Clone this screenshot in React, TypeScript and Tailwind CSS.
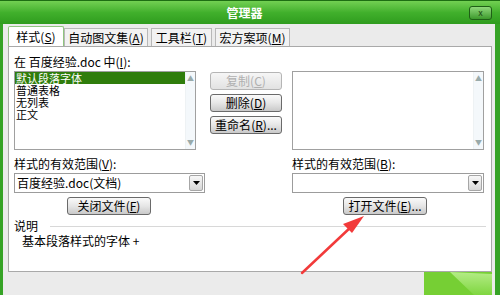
import React from 'react';

const font = { fontFamily: '"Noto Sans CJK SC", "Liberation Sans", sans-serif' };

function Key({ k }: { k: string }) {
  return (
    <>
      (<span className="underline">{k}</span>)
    </>
  );
}

function Btn({ children, disabled, w }: { children: React.ReactNode; disabled?: boolean; w: string }) {
  return (
    <div
      className={`${w} h-[18px] flex items-center justify-center rounded-[3px] border text-[12px] leading-none ${
        disabled
          ? 'border-[#b5b5b5] text-[#b0b0b0] bg-gradient-to-b from-[#f6f6f6] to-[#e2e2e2]'
          : 'border-[#6a6a6a] text-black bg-gradient-to-b from-[#fafafa] via-[#e6e6e6] to-[#c9c9c9]'
      }`}
    >
      {children}
    </div>
  );
}

function ScrollBar() {
  return (
    <div className="w-[10px] h-full flex flex-col justify-between items-center bg-[#f4f8fb] border-l border-[#eef2f4] text-[7px] text-[#9aa] leading-none py-[3px]">
      <span>▲</span>
      <span>▼</span>
    </div>
  );
}

function Combo({ text }: { text?: string }) {
  return (
    <div className="h-[20px] flex border border-[#9c9c9c] bg-white">
      <div className="flex-1 flex items-center pl-[2px] text-[12px] leading-none">{text}</div>
      <div className="w-[14px] m-[1px] flex items-center justify-center rounded-[2px] border border-[#a6a6a6] bg-gradient-to-b from-[#f8f8f8] to-[#d6d6d6]">
        <svg width="7" height="4" viewBox="0 0 7 4">
          <polygon points="0,0 7,0 3.5,4" fill="#000" />
        </svg>
      </div>
    </div>
  );
}

export default function App() {
  const styles = ['默认段落字体', '普通表格', '无列表', '正文'];
  return (
    <div className="w-[500px] h-[295px] overflow-hidden relative flex flex-col bg-[#36a326]" style={font}>
      {/* title bar */}
      <div className="h-[24px] flex items-center bg-gradient-to-b from-[#72d052] via-[#41b02c] to-[#2f9c1e] border-t border-[#1d6e12]">
        <div className="flex-1 text-center text-white text-[12px] font-bold pl-[20px]">管理器</div>
        <div className="w-[23px] h-[14px] mr-[8px] rounded-[3px] border border-[#1f5f16] bg-gradient-to-b from-[#8fd97a] to-[#3c9a2b] flex items-center justify-center text-[9px] text-[#1b4b12] leading-none">
          x
        </div>
      </div>

      {/* body */}
      <div className="flex-1 ml-[3px] mr-[5px] bg-[#ebebeb] flex flex-col text-black">
        {/* tabs */}
        <div className="flex items-end h-[22px] pl-[5px] text-[12px] leading-none">
          <div className="w-[56px] h-[20px] flex items-center justify-center border border-b-0 border-[#8fc57f] bg-white rounded-t-[2px]">
            样式<Key k="S" />
          </div>
          <div className="w-[84px] h-[18px] flex items-center justify-center border border-b-0 border-[#b8b8b8] bg-[#f2f2f2]">
            自动图文集<Key k="A" />
          </div>
          <div className="w-[61px] h-[18px] ml-[3px] flex items-center justify-center border border-b-0 border-[#b8b8b8] bg-[#f2f2f2]">
            工具栏<Key k="T" />
          </div>
          <div className="w-[75px] h-[18px] ml-[3px] flex items-center justify-center border border-b-0 border-[#b8b8b8] bg-[#f2f2f2]">
            宏方案项<Key k="M" />
          </div>
        </div>

        {/* panel */}
        <div className="ml-[5px] mr-[3px] h-[226px] bg-white border border-[#a9a9a9] flex flex-col px-[5px] pt-[9px] text-[12px] leading-none">
          <div className="h-[12px]">在 百度经验.doc 中<Key k="I" />:</div>

          <div className="flex mt-[3px] h-[79px]">
            <div className="w-[182px] h-full border border-[#a0a0a0] flex">
              <div className="flex-1 text-[11px] leading-[12px]">
                {styles.map((s, i) => (
                  <div key={s} className={i === 0 ? 'bg-[#2f7d0c] text-white pl-[1px] h-[12px]' : 'pl-[1px] h-[12px]'}>
                    {s}
                  </div>
                ))}
              </div>
              <ScrollBar />
            </div>
            <div className="w-[96px] flex flex-col items-center gap-[4px] pt-[1px] pl-[4px]">
              <Btn w="w-[72px]" disabled>复制<Key k="C" /></Btn>
              <Btn w="w-[72px]">删除<Key k="D" /></Btn>
              <Btn w="w-[72px]">重命名<Key k="R" />...</Btn>
            </div>
            <div className="w-[192px] h-full border border-[#a0a0a0] flex">
              <div className="flex-1" />
              <ScrollBar />
            </div>
          </div>

          <div className="flex mt-[7px]">
            <div className="w-[278px] flex flex-col">
              <div className="h-[14px] flex items-center">样式的有效范围<Key k="V" />:</div>
              <div className="w-[191px] mt-[2px]">
                <Combo text="百度经验.doc(文档)" />
              </div>
              <div className="pl-[53px] mt-[4px]">
                <Btn w="w-[84px]">关闭文件<Key k="F" /></Btn>
              </div>
            </div>
            <div className="w-[192px] flex flex-col">
              <div className="h-[14px] flex items-center">样式的有效范围<Key k="B" />:</div>
              <div className="mt-[2px]">
                <Combo />
              </div>
              <div className="pl-[51px] mt-[4px]">
                <Btn w="w-[84px]">打开文件<Key k="E" />...</Btn>
              </div>
            </div>
          </div>

          <div className="flex items-center mt-[4px] h-[14px]">
            <span>说明</span>
            <div className="flex-1 ml-[12px] h-px bg-[#d8d8d8]" />
          </div>
          <div className="pl-[8px] mt-[2px]">基本段落样式的字体 +</div>
        </div>

        {/* bottom strip */}
        <div className="flex-1 flex justify-end items-end pr-[3px]">
          <svg width="68" height="23" viewBox="0 0 68 23">
            <defs>
              <linearGradient id="g2" x1="0" y1="0" x2="0" y2="1">
                <stop offset="0" stopColor="#b4ec86" />
                <stop offset="1" stopColor="#7fd640" />
              </linearGradient>
            </defs>
            <rect x="0" y="0" width="68" height="23" fill="#76cf34" />
            <polygon points="26,0 68,2 68,23 50,23" fill="url(#g2)" />
          </svg>
        </div>
      </div>

      {/* red arrow */}
      <svg className="absolute left-0 top-0 pointer-events-none" width="500" height="295">
        <line x1="302" y1="273" x2="352" y2="226" stroke="#f23a3a" strokeWidth="2.5" strokeLinecap="round" />
        <polygon points="364,216 343,224 352,233" fill="#f23a3a" />
      </svg>
    </div>
  );
}
